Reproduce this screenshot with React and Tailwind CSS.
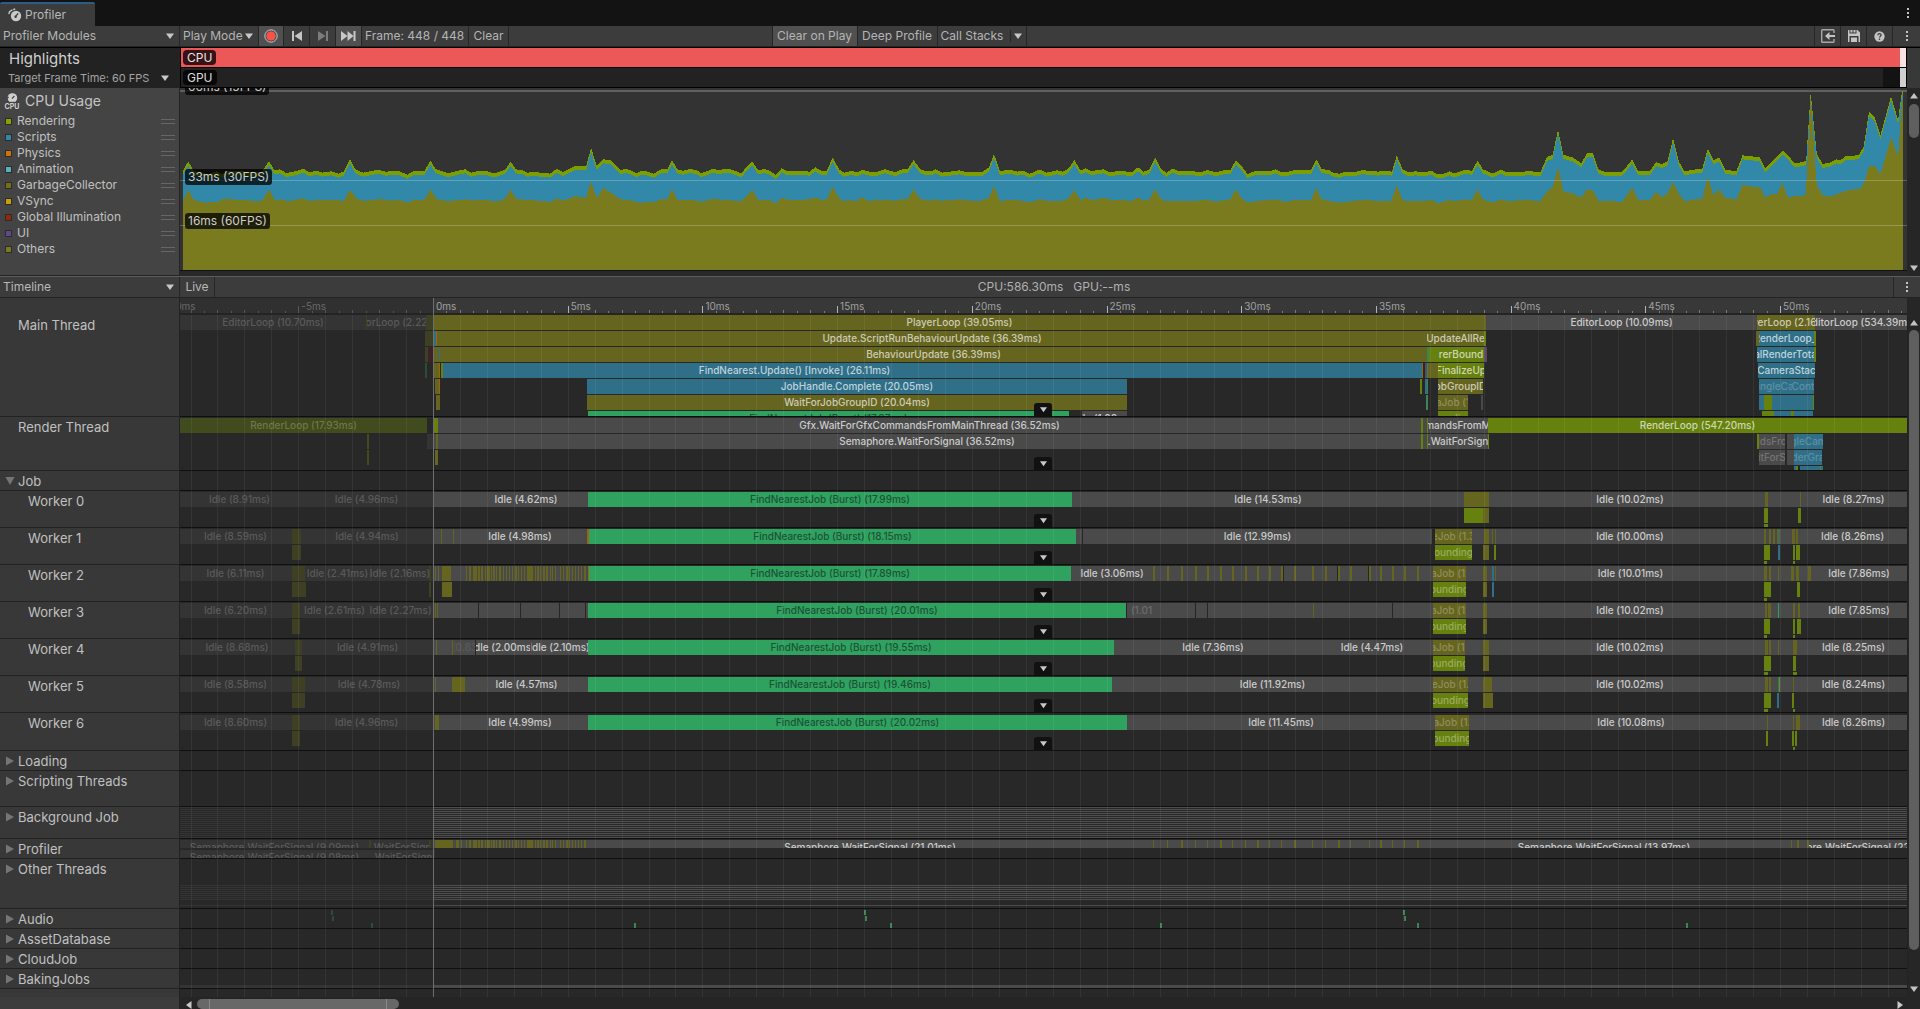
import React from 'react';
import clsx from 'clsx';

// Horizontal units of the timeline tracks, and where the current frame begins
const TRACK = 1727;
const FRAME_START = 253;
const MS = 26.94;

const pct = (v) => `${(v / TRACK) * 100}%`;

const COLORS = {
  olive: 'bg-[#66651f] text-[#cccbb4]',
  oliveFaint: 'bg-[#66651f] text-[#8f8e5c]',
  green: 'bg-[#67810e] text-[#cfd6b2]',
  greenFaint: 'bg-[#67810e] text-[#9bab60]',
  blue: 'bg-[#306f88] text-[#bdd3dc]',
  blueFaint: 'bg-[#306f88] text-[#5c90a5]',
  burst: 'bg-[#2fa260] text-[#1d5236]',
  gray: 'bg-[#4a4a4a] text-[#cacaca]',
  grayFaint: 'bg-[#4a4a4a] text-[#747474]',
  text: 'text-[#cacaca]',
  textFaint: 'text-[#6c6c6c]',
  orange: 'bg-[#9a6410]',
  purple: 'bg-[#5a4a66]',
  maroon: 'bg-[#3c2229]',
  teal: 'bg-[#3f8355]',
  gap: 'bg-[#262626]',
  pastGray: 'bg-[#343434] text-[#5a5a5a]',
  pastText: 'text-[#5a5a5a]',
  pastOlive: 'bg-[#3f3f24]',
  pastGreen: 'bg-[#404b1e] text-[#6e7847]',
  pastTeal: 'bg-[#314b39]',
};

// [lane, start, end, color, label]
const MAIN = [
  [0, 0, 186, 'pastGray', 'EditorLoop (10.70ms)'],
  [0, 186, 187, 'pastOlive'],
  [0, 187, 246, 'pastGray', 'EditorLoop (2.22ms)'],
  [0, 246, 253, 'pastOlive'],
  [0, 253, 1306, 'olive', 'PlayerLoop (39.05ms)'],
  [0, 1306, 1577, 'gray', 'EditorLoop (10.09ms)'],
  [0, 1577, 1635, 'olive', 'PlayerLoop (2.16ms)'],
  [0, 1635, 1727, 'gray', 'EditorLoop (534.39ms)'],
  [1, 245, 253, 'pastOlive'],
  [1, 254, 256, 'blue'],
  [1, 256, 257, 'orange'],
  [1, 257, 1247, 'olive', 'Update.ScriptRunBehaviourUpdate (36.39ms)'],
  [1, 1247, 1304, 'olive', 'UpdateAllRe'],
  [1, 1304, 1306, 'green'],
  [1, 1576, 1579, 'olive'],
  [1, 1579, 1634, 'blue', 'RenderLoop_I'],
  [1, 1634, 1636, 'green'],
  [2, 245, 248, 'pastOlive'],
  [2, 248, 253, 'maroon'],
  [2, 253, 259, 'olive'],
  [2, 259, 260, 'blue'],
  [2, 260, 1247, 'olive', 'BehaviourUpdate (36.39ms)'],
  [2, 1247, 1249, 'teal'],
  [2, 1249, 1258, 'green'],
  [2, 1258, 1304, 'green', 'rerBound'],
  [2, 1304, 1307, 'purple'],
  [2, 1577, 1634, 'blue', 'alRenderTota'],
  [2, 1634, 1636, 'green'],
  [3, 245, 247, 'pastTeal'],
  [3, 253, 259, 'olive'],
  [3, 259, 260, 'orange'],
  [3, 261, 263, 'green'],
  [3, 263, 966, 'blue', 'FindNearest.Update() [Invoke] (26.11ms)'],
  [3, 966, 1242, 'blue'],
  [3, 1242, 1243, 'orange'],
  [3, 1245, 1247, 'purple'],
  [3, 1247, 1248, 'teal'],
  [3, 1248, 1258, 'olive'],
  [3, 1258, 1304, 'green', 'FinalizeUp'],
  [3, 1578, 1635, 'blue', 'CameraStac'],
  [4, 255, 259, 'olive'],
  [4, 259, 260, 'orange'],
  [4, 407, 947, 'blue', 'JobHandle.Complete (20.05ms)'],
  [4, 1240, 1242, 'green'],
  [4, 1245, 1247, 'blue'],
  [4, 1247, 1248, 'teal'],
  [4, 1258, 1303, 'olive', 'obGroupID'],
  [4, 1579, 1612, 'blueFaint', 'ingleCa'],
  [4, 1612, 1634, 'blueFaint', 'Cont'],
  [5, 256, 260, 'olive'],
  [5, 407, 947, 'olive', 'WaitForJobGroupID (20.04ms)'],
  [5, 1246, 1248, 'teal'],
  [5, 1258, 1288, 'oliveFaint', 'aJob (1'],
  [5, 1301, 1303, 'gray'],
  [5, 1579, 1633, 'blue'],
  [5, 1584, 1592, 'green'],
  [5, 1633, 1634, 'green'],
  [6, 408, 889, 'burst', 'FindNearestJob (Burst) (17.87ms)'],
  [6, 902, 947, 'gray', 'Idle (1.00ms)'],
  [6, 1258, 1288, 'greenFaint', 'ounding'],
  [6, 1582, 1594, 'green'],
  [6, 1594, 1633, 'blue'],
  [6, 1611, 1614, 'green'],
];

const RENDER = [
  [0, 0, 247, 'pastGreen', 'RenderLoop (17.93ms)'],
  [0, 254, 258, 'green'],
  [0, 258, 1241, 'gray', 'Gfx.WaitForGfxCommandsFromMainThread (36.52ms)'],
  [0, 1241, 1243, 'green'],
  [0, 1243, 1247, 'gray'],
  [0, 1247, 1248, 'green'],
  [0, 1248, 1308, 'gray', 'mandsFromM'],
  [0, 1308, 1727, 'green', 'RenderLoop (547.20ms)'],
  [1, 187, 189, 'pastGreen'],
  [1, 247, 253, 'pastGray'],
  [1, 253, 1241, 'gray', 'Semaphore.WaitForSignal (36.52ms)'],
  [1, 256, 258, 'olive'],
  [1, 1241, 1243, 'green'],
  [1, 1243, 1247, 'gray'],
  [1, 1247, 1248, 'green'],
  [1, 1248, 1308, 'gray', '.WaitForSign'],
  [1, 1308, 1309, 'green'],
  [1, 1577, 1579, 'green'],
  [1, 1579, 1605, 'grayFaint', 'idsFro'],
  [1, 1607, 1614, 'gray'],
  [1, 1614, 1643, 'blueFaint', 'gleCam'],
  [2, 187, 189, 'pastGreen'],
  [2, 255, 258, 'olive'],
  [2, 1579, 1605, 'grayFaint', 'itForS'],
  [2, 1607, 1614, 'gray'],
  [2, 1614, 1642, 'blueFaint', 'derGra'],
  [3, 1614, 1643, 'blue'],
  [3, 1616, 1618, 'green'],
  [3, 1618, 1620, 'gap'],
  [3, 1640, 1641, 'green'],
];

const many = (lane, color, spans) => spans.map(([a, b]) => [lane, a, b, color]);

const STRIPES = [
  [286, 287], [289, 291], [293, 297], [298, 300], [301, 303], [305, 306], [307, 310], [311, 312],
  [313, 315], [316, 317], [319, 321], [323, 324], [326, 327], [329, 330], [332, 333], [335, 337],
  [338, 339], [341, 342], [344, 345], [347, 353], [355, 356], [357, 359], [360, 361], [363, 365],
  [366, 368], [370, 371], [372, 373], [375, 376], [380, 381], [383, 384], [386, 388], [389, 390],
  [392, 393], [395, 396], [398, 399], [401, 402], [404, 406],
];

const TICKS = [
  973, 987, 1001, 1015, 1027, 1040, 1052, 1065, 1077, 1089, 1101, 1114, 1132, 1145, 1158, 1170,
  1189, 1200, 1212, 1224, 1237,
];

const WORKERS = [
  {
    name: 'Worker 0',
    bars: [
      [0, 0, 119, 'pastText', 'Idle (8.91ms)'],
      [0, 120, 253, 'pastText', 'Idle (4.96ms)'],
      [0, 284, 408, 'text', 'Idle (4.62ms)'],
      [0, 408, 892, 'burst', 'FindNearestJob (Burst) (17.99ms)'],
      [0, 892, 1284, 'text', 'Idle (14.53ms)'],
      [0, 1284, 1309, 'olive'],
      [0, 1315, 1585, 'text', 'Idle (10.02ms)'],
      [0, 1620, 1727, 'text', 'Idle (8.27ms)'],
      ...many(0, 'olive', [[1585, 1588], [1620, 1621]]),
      ...many(1, 'green', [[1284, 1303], [1584, 1588], [1618, 1621]]),
      [1, 1303, 1309, 'olive'],
      [2, 1584, 1588, 'green'],
    ],
  },
  {
    name: 'Worker 1',
    bars: [
      [0, 0, 111, 'pastText', 'Idle (8.59ms)'],
      ...many(0, 'pastOlive', [[112, 121]]),
      ...many(1, 'pastOlive', [[112, 121]]),
      [0, 121, 253, 'pastText', 'Idle (4.94ms)'],
      ...many(0, 'olive', [[261, 262], [273, 274]]),
      [0, 273, 407, 'text', 'Idle (4.98ms)'],
      [0, 407, 409, 'orange'],
      [0, 409, 896, 'burst', 'FindNearestJob (Burst) (18.15ms)'],
      ...many(0, 'gap', [[902, 903], [1252, 1255]]),
      [0, 903, 1252, 'text', 'Idle (12.99ms)'],
      [0, 1255, 1292, 'oliveFaint', 'eJob (1.3'],
      [1, 1255, 1292, 'greenFaint', 'ounding'],
      [0, 1315, 1585, 'text', 'Idle (10.00ms)'],
      ...many(0, 'olive', [[1304, 1309], [1312, 1313], [1315, 1316], [1584, 1586], [1589, 1591], [1593, 1595], [1597, 1599], [1612, 1615], [1616, 1618]]),
      [0, 1599, 1600, 'blue'],
      [1, 1303, 1309, 'olive'],
      ...many(1, 'green', [[1314, 1316], [1584, 1590], [1613, 1615], [1616, 1620]]),
      [1, 1598, 1600, 'blue'],
      ...many(2, 'green', [[1584, 1587], [1613, 1615]]),
      [0, 1618, 1727, 'text', 'Idle (8.26ms)'],
    ],
  },
  {
    name: 'Worker 2',
    bars: [
      [0, 0, 111, 'pastText', 'Idle (6.11ms)'],
      ...many(0, 'pastOlive', [[112, 125], [190, 191], [249, 251]]),
      ...many(1, 'pastOlive', [[112, 126], [249, 251]]),
      [0, 125, 190, 'pastText', 'Idle (2.41ms)'],
      [0, 190, 250, 'pastText', 'Idle (2.16ms)'],
      ...many(0, 'olive', [[255, 256], [258, 259], [262, 271]]),
      [1, 262, 272, 'olive'],
      ...many(0, 'olive', STRIPES),
      [0, 408, 409, 'orange'],
      [0, 409, 891, 'burst', 'FindNearestJob (Burst) (17.89ms)'],
      [0, 891, 973, 'text', 'Idle (3.06ms)'],
      ...many(0, 'olive', TICKS.map((t) => [t, t + 2])),
      ...many(0, 'gap', [[1103, 1104], [1157, 1158], [1188, 1189]]),
      [0, 1253, 1286, 'oliveFaint', 'aJob (1.'],
      [1, 1253, 1286, 'greenFaint', 'ounding'],
      ...many(0, 'olive', [[1303, 1307], [1315, 1316], [1584, 1587], [1589, 1591], [1598, 1599], [1611, 1614], [1616, 1619], [1628, 1631]]),
      [1, 1303, 1307, 'olive'],
      [0, 1312, 1314, 'blue'],
      [1, 1312, 1314, 'blue'],
      [0, 1316, 1585, 'text', 'Idle (10.01ms)'],
      ...many(1, 'green', [[1584, 1591], [1617, 1620]]),
      [2, 1584, 1587, 'green'],
      [0, 1631, 1727, 'text', 'Idle (7.86ms)'],
    ],
  },
  {
    name: 'Worker 3',
    bars: [
      [0, 0, 111, 'pastText', 'Idle (6.20ms)'],
      [0, 112, 120, 'pastOlive'],
      [1, 112, 120, 'pastOlive'],
      [0, 120, 189, 'pastText', 'Idle (2.61ms)'],
      [0, 189, 252, 'pastText', 'Idle (2.27ms)'],
      ...many(0, 'olive', [[255, 256], [257, 258]]),
      ...many(0, 'gap', [[298, 299], [340, 341], [379, 380], [405, 406], [946, 947], [1015, 1016], [1027, 1028], [1212, 1213]]),
      [0, 408, 946, 'burst', 'FindNearestJob (Burst) (20.01ms)'],
      [0, 949, 974, 'textFaint', '(1.01'],
      [0, 1133, 1134, 'olive'],
      [0, 1253, 1286, 'oliveFaint', 'aJob (1.'],
      [1, 1253, 1286, 'greenFaint', 'ounding'],
      ...many(0, 'olive', [[1303, 1307], [1585, 1587], [1588, 1591], [1613, 1615], [1618, 1620]]),
      [1, 1303, 1307, 'olive'],
      [0, 1598, 1599, 'burst'],
      [0, 1315, 1585, 'text', 'Idle (10.02ms)'],
      ...many(1, 'green', [[1584, 1590], [1613, 1615], [1617, 1621]]),
      ...many(2, 'green', [[1584, 1587], [1613, 1615]]),
      [0, 1631, 1727, 'text', 'Idle (7.85ms)'],
    ],
  },
  {
    name: 'Worker 4',
    bars: [
      [0, 0, 114, 'pastText', 'Idle (8.68ms)'],
      [0, 115, 122, 'pastOlive'],
      [1, 115, 122, 'pastOlive'],
      [0, 122, 253, 'pastText', 'Idle (4.91ms)'],
      ...many(0, 'olive', [[256, 257], [272, 273]]),
      [0, 274, 295, 'pastText', '(0.83'],
      [0, 295, 296, 'gap'],
      [0, 296, 350, 'text', 'Idle (2.00ms)'],
      [0, 351, 408, 'text', 'Idle (2.10ms)'],
      [0, 408, 934, 'burst', 'FindNearestJob (Burst) (19.55ms)'],
      [0, 934, 1132, 'text', 'Idle (7.36ms)'],
      [0, 1132, 1252, 'text', 'Idle (4.47ms)'],
      [0, 1253, 1285, 'oliveFaint', 'aJob (1.'],
      [1, 1253, 1285, 'greenFaint', 'ounding'],
      ...many(0, 'olive', [[1303, 1309], [1585, 1588], [1589, 1591], [1598, 1599], [1613, 1617]]),
      [1, 1303, 1309, 'olive'],
      [0, 1315, 1585, 'text', 'Idle (10.02ms)'],
      ...many(1, 'green', [[1584, 1591], [1613, 1616]]),
      ...many(2, 'green', [[1584, 1588], [1613, 1617]]),
      [0, 1620, 1727, 'text', 'Idle (8.25ms)'],
    ],
  },
  {
    name: 'Worker 5',
    bars: [
      [0, 0, 111, 'pastText', 'Idle (8.58ms)'],
      [0, 112, 125, 'pastOlive'],
      [1, 112, 125, 'pastOlive'],
      [0, 125, 253, 'pastText', 'Idle (4.78ms)'],
      ...many(0, 'olive', [[255, 256], [272, 285]]),
      [0, 285, 408, 'text', 'Idle (4.57ms)'],
      [0, 408, 932, 'burst', 'FindNearestJob (Burst) (19.46ms)'],
      [0, 932, 1253, 'text', 'Idle (11.92ms)'],
      [0, 1253, 1288, 'oliveFaint', 'eJob (1.'],
      [1, 1253, 1288, 'greenFaint', 'ounding'],
      ...many(0, 'olive', [[1303, 1312], [1585, 1588], [1589, 1591], [1598, 1599], [1613, 1614]]),
      [0, 1599, 1600, 'burst'],
      [1, 1303, 1313, 'olive'],
      [0, 1315, 1585, 'text', 'Idle (10.02ms)'],
      ...many(1, 'green', [[1584, 1591], [1612, 1614]]),
      [1, 1597, 1599, 'blue'],
      ...many(2, 'green', [[1584, 1588], [1613, 1615]]),
      [0, 1620, 1727, 'text', 'Idle (8.24ms)'],
    ],
  },
  {
    name: 'Worker 6',
    height: 'h-[38px]',
    pad: 2,
    bars: [
      [0, 0, 111, 'pastText', 'Idle (8.60ms)'],
      [0, 112, 120, 'pastOlive'],
      [1, 112, 120, 'pastOlive'],
      [0, 120, 253, 'pastText', 'Idle (4.96ms)'],
      [0, 255, 259, 'olive'],
      [0, 272, 408, 'text', 'Idle (4.99ms)'],
      [0, 408, 947, 'burst', 'FindNearestJob (Burst) (20.02ms)'],
      [0, 947, 1255, 'text', 'Idle (11.45ms)'],
      [0, 1255, 1289, 'oliveFaint', 'aJob (1.'],
      [1, 1255, 1289, 'greenFaint', 'ounding'],
      [0, 1316, 1586, 'text', 'Idle (10.08ms)'],
      ...many(0, 'olive', [[1587, 1588], [1613, 1614], [1616, 1620]]),
      ...many(1, 'green', [[1586, 1588], [1612, 1614], [1615, 1617]]),
      [2, 1613, 1615, 'green'],
      [0, 1620, 1727, 'text', 'Idle (8.26ms)'],
    ],
  },
];

const PROFILER = [
  [0, 0, 189, 'pastText', 'Semaphore.WaitForSignal (9.09ms)'],
  [0, 189, 191, 'pastOlive'],
  [0, 192, 250, 'pastText', '.WaitForSign'],
  [0, 249, 251, 'pastOlive'],
  ...many(0, 'olive', [[255, 273], [276, 279], [281, 282]]),
  ...many(0, 'olive', STRIPES),
  [0, 408, 972, 'text', 'Semaphore.WaitForSignal (21.01ms)'],
  ...many(0, 'olive', TICKS.map((t, i) => [t, t + (i % 3 === 2 ? 2 : 1)])),
  [0, 1238, 1610, 'text', 'Semaphore.WaitForSignal (13.97ms)'],
  ...many(0, 'olive', [[1611, 1612], [1617, 1619], [1627, 1629]]),
  [0, 1629, 1727, 'text', 'ore.WaitForSignal (22'],
];

const AUDIO_TOP = [[151, 'pastTeal'], [684, 'teal'], [1223, 'teal']];
const AUDIO_BOTTOM = [[191, 'pastTeal'], [454, 'teal'], [710, 'teal'], [980, 'teal'], [1237, 'teal'], [1506, 'teal']];

const LEGEND = [
  ['Rendering', 'bg-[#85a400]'],
  ['Scripts', 'bg-[#3288a9]'],
  ['Physics', 'bg-[#d07300]'],
  ['Animation', 'bg-[#58b2bb]'],
  ['GarbageCollector', 'bg-[#756f12]'],
  ['VSync', 'bg-[#c8a100]'],
  ['Global Illumination', 'bg-[#93280a]'],
  ['UI', 'bg-[#63478b]'],
  ['Others', 'bg-[#7a7a1f]'],
];

// CPU chart samples, in three pages of 1568 units: total time and the share of "Others"
const PAGE = 1568;
const TOTAL = [
  '448,514 461,484 474,512 490,518 510,522 530,514 545,522 560,512 590,513 615,518 640,517 659,484 672,510 686,508 700,518 715,517 743,506 757,517 775,512 790,518 812,514 830,521 843,514 857,477 870,508 890,518 925,509 945,515 975,512 998,524 1012,514 1040,514 1054,481 1068,508 1085,514 1099,520 1115,514 1140,508 1155,518 1172,513 1195,514 1210,520 1237,510 1251,485 1264,508 1280,511 1292,518 1310,516 1348,521 1364,506 1380,516 1410,498 1436,499 1448,444 1462,496 1478,478 1495,480 1520,511 1535,506 1560,520',
  '0,514 15,514 33,521 52,508 68,507 78,480 92,508 105,512 122,507 138,510 150,520 176,508 195,509 218,507 235,513 247,520 275,484 290,511 305,507 318,512 332,524 347,505 362,514 388,512 415,515 430,502 446,514 457,512 472,474 488,508 500,518 515,514 535,515 545,510 565,516 580,516 600,508 625,516 644,508 656,508 670,480 687,508 700,514 712,514 725,508 740,518 783,511 800,516 838,516 855,502 867,462 882,513 905,509 925,515 938,512 955,521 980,508 995,518 1022,511 1036,515 1050,505 1064,480 1079,511 1092,505 1106,513 1135,508 1150,516 1178,513 1205,516 1220,502 1234,515 1248,508 1262,472 1276,507 1290,518 1305,506 1320,514 1355,514 1375,516 1390,510 1410,517 1430,511 1446,510 1460,480 1474,498 1488,522 1505,514 1540,514 1558,508',
  '0,515 18,516 34,511 76,511 89,478 102,508 118,509 132,519 145,521 160,516 180,517 200,511 222,512 240,515 256,512 274,515 286,466 300,508 315,517 330,514 357,517 370,511 383,522 400,522 414,514 428,520 455,509 470,513 484,482 497,508 522,521 541,508 555,516 590,516 610,513 638,517 654,470 668,465 681,388 694,464 716,472 738,490 752,460 766,458 780,508 796,516 838,516 863,478 878,514 906,514 921,487 935,492 949,484 963,414 977,484 991,514 1020,508 1034,508 1048,446 1062,480 1076,472 1091,509 1118,514 1133,466 1175,472 1189,506 1203,486 1217,470 1231,452 1245,466 1259,489 1280,487 1289,482 1300,279 1315,462 1329,491 1344,490 1362,478 1374,480 1386,467 1400,469 1418,464 1430,440 1443,334 1457,352 1471,406 1497,289 1514,360 1524,273 1526,273',
];
const OTHERS = [
  '448,604 461,570 475,600 505,608 535,605 545,597 600,600 635,604 645,598 659,568 672,600 690,598 705,604 743,595 757,602 800,600 843,602 857,570 875,596 890,603 930,597 960,602 975,599 998,608 1012,600 1040,601 1054,568 1070,598 1100,603 1140,598 1165,601 1195,600 1215,605 1237,597 1251,568 1264,597 1310,601 1348,606 1364,595 1382,602 1410,588 1435,594 1448,544 1462,594 1478,564 1500,580 1520,598 1545,600 1566,608',
  '33,606 52,598 68,598 78,567 92,600 130,600 150,605 176,597 218,600 247,604 275,570 290,600 318,600 332,610 347,594 370,600 415,598 430,592 446,600 458,597 472,560 488,595 500,603 515,600 528,604 543,592 560,602 600,600 625,602 640,598 656,597 670,568 687,597 712,602 725,598 740,602 783,598 830,604 855,594 867,557 882,603 915,599 955,606 980,598 1000,603 1036,602 1050,594 1064,570 1079,600 1092,594 1110,600 1135,593 1155,600 1205,602 1220,592 1234,602 1248,598 1262,567 1276,597 1290,604 1350,604 1390,599 1410,605 1446,598 1460,567 1474,596 1488,607 1520,602 1558,598',
  '0,602 18,606 34,600 76,600 89,564 102,598 145,608 200,600 272,604 286,556 300,600 315,604 355,604 370,598 385,609 400,606 414,598 425,604 455,598 470,600 484,568 497,598 522,608 541,598 555,603 600,600 638,603 654,574 668,562 681,500 694,574 716,580 738,592 752,568 766,570 780,603 838,605 863,563 878,600 906,600 921,576 935,592 949,580 963,546 977,582 991,604 1020,598 1034,598 1048,530 1062,586 1076,568 1091,594 1118,598 1133,555 1160,560 1175,560 1189,594 1203,582 1217,582 1231,550 1245,594 1259,588 1288,586 1300,290 1315,556 1329,584 1344,590 1362,584 1386,572 1420,566 1430,552 1443,498 1457,498 1471,522 1497,412 1514,470 1524,300 1526,300',
];

const toArea = (pages, drop = 0) => {
  const points = pages.flatMap((page, i) =>
    page.split(' ').map((pair) => {
      const [x, y] = pair.split(',').map(Number);
      return `${x + i * PAGE},${y + drop}`;
    })
  );
  return `448,810 ${points.join(' ')} 4662,810`;
};

const Triangle = ({ dir = 'down', className }) => (
  <svg
    viewBox="0 0 8 8"
    className={clsx('size-2 shrink-0 fill-current', dir === 'up' && 'rotate-180', dir === 'left' && 'rotate-90', dir === 'right' && '-rotate-90', className)}
    aria-hidden="true"
  >
    <path d="M0 1.5h8L4 7z" />
  </svg>
);

const FoldArrow = ({ open }) => (
  <svg viewBox="0 0 10 10" className="mr-[3px] size-[10px] shrink-0 fill-[#757575]" aria-hidden="true">
    <path d={open ? 'M.5 1h9L5 9z' : 'M1 .5v9L9 5z'} />
  </svg>
);

const Kebab = () => (
  <svg viewBox="0 0 4 12" className="h-3 w-1 fill-[#c4c4c4]" aria-hidden="true">
    <path d="M1 1h2v2H1zM1 5h2v2H1zM1 9h2v2H1z" />
  </svg>
);

const Dropdown = ({ label, value, className, caret = 'right-[5px]' }) => (
  <div className={clsx('relative flex items-center', className)}>
    <select aria-label={label} defaultValue={value} className="h-full w-full appearance-none bg-transparent pl-[3px] outline-none">
      <option>{value}</option>
    </select>
    <Triangle className={clsx('pointer-events-none absolute text-[#c8c8c8]', caret)} />
  </div>
);

const ToolButton = ({ label, active, className, children }) => (
  <button
    aria-label={label}
    className={clsx('flex h-full items-center justify-center border-r border-[#262626]', active && 'bg-[#505050]', className)}
  >
    {children}
  </button>
);

const Stopwatch = () => (
  <svg viewBox="0 0 14 14" className="size-[14px] shrink-0" aria-hidden="true">
    <circle cx="8" cy="8" r="5.2" fill="#c9c9c9" />
    <path d="M.8 6 1.6 3.8 4.4 1.8M5.2 1.6 7.200 1" stroke="#c9c9c9" strokeWidth="1.4" fill="none" />
    <path d="M7.600 8.400 10.200 5.400" stroke="#3c3c3c" strokeWidth="1.4" />
    <circle cx="7.600" cy="8.800" r="1.200" fill="#3c3c3c" />
  </svg>
);

const CpuIcon = () => (
  <svg viewBox="0 0 16 16" className="size-4 shrink-0" aria-hidden="true">
    <circle cx="8.4" cy="5" r="4.8" fill="#d0d0d0" />
    <path d="M3 5.4 4.6 4M8 5.6l2.4-2.8" stroke="#444" strokeWidth="1.3" />
    <path d="M3 9.4h11" stroke="#444" strokeWidth="1.2" />
    <text x="8" y="15.600" textAnchor="middle" fontSize="7" fontWeight="700" fill="#d0d0d0">CPU</text>
  </svg>
);

const Toolbar = () => (
  <div className="flex h-[21px] shrink-0 items-stretch border-b border-[#232323] bg-[#3c3c3c] text-[#b4b4b4]">
    <Dropdown label="Profiler Modules" value="Profiler Modules" className="w-[180px] border-r border-[#262626]" />
    <Dropdown label="Play Mode" value="Play Mode" className="w-[79px] border-r border-[#262626]" />
    <ToolButton label="Record" active className="w-[25px]">
      <svg viewBox="0 0 14 14" className="size-[14px]" aria-hidden="true">
        <circle cx="7" cy="7" r="6.2" fill="none" stroke="#c4c4c4" />
        <circle cx="7" cy="7" r="4.6" fill="#fb5147" />
      </svg>
    </ToolButton>
    <ToolButton label="Previous frame" className="w-[26px]">
      <svg viewBox="0 0 12 10" className="h-[10px] w-3 fill-[#c4c4c4]" aria-hidden="true">
        <path d="M1 0h2v10H1zM11 0v10L3.5 5z" />
      </svg>
    </ToolButton>
    <ToolButton label="Next frame" className="w-[26px]">
      <svg viewBox="0 0 12 10" className="h-[10px] w-3 fill-[#7c7c7c]" aria-hidden="true">
        <path d="M9 0h2v10H9zM1 0v10l7.5-5z" />
      </svg>
    </ToolButton>
    <ToolButton label="Current frame" active className="w-[26px]">
      <svg viewBox="0 0 15 10" className="h-[10px] w-[15px] fill-[#c8c8c8]" aria-hidden="true">
        <path d="M0 0v10l6.5-5zM6.5 0v10l6-5zM12.5 0h2v10h-2z" />
      </svg>
    </ToolButton>
    <span className="flex w-[107px] items-center border-r border-[#262626] pl-[3px] whitespace-nowrap">Frame: 448 / 448</span>
    <ToolButton className="w-10">Clear</ToolButton>
    <div className="flex-1 border-r border-[#262626]" />
    <ToolButton active className="w-[85px] whitespace-nowrap">Clear on Play</ToolButton>
    <ToolButton className="w-[80px] whitespace-nowrap">Deep Profile</ToolButton>
    <div className="flex w-[89px] items-center border-r border-[#262626]">
      <button className="w-[72px] pl-[3px] text-left whitespace-nowrap">Call Stacks</button>
      <button aria-label="Call Stacks options" className="flex h-3 flex-1 items-center justify-center border-l border-[#262626]">
        <Triangle className="text-[#c8c8c8]" />
      </button>
    </div>
    <div className="flex-3 border-r border-[#262626]" />
    <ToolButton label="Load" className="w-[26px]">
      <svg viewBox="0 0 14 14" className="size-[14px]" fill="none" stroke="#c4c4c4" aria-hidden="true">
        <path d="M13 4V1.500a.8.8 0 0 0-.8-.8H1.500a.8.8 0 0 0-.8.8v11a.8.8 0 0 0 .8.8h10.700a.8.8 0 0 0 .8-.8V10" stroke="#a8a8a8" strokeWidth="1.4" />
        <path d="M7 7h7" strokeWidth="2" />
        <path d="M8.500 3v8L4 7z" fill="#c4c4c4" stroke="none" />
      </svg>
    </ToolButton>
    <ToolButton label="Save" className="w-[26px]">
      <svg viewBox="0 0 12 12" className="size-3" aria-hidden="true">
        <path d="M0 0h1.5v3.5h7V0h1L12 2.5V12h-1.5V6h-9v6H0z" fill="#c4c4c4" />
        <path d="M2.500 0h2v2.500h-2zM5.500 0h2v2.500h-2zM3 7.500h6V12H3z" fill="#c4c4c4" />
      </svg>
    </ToolButton>
    <ToolButton label="Help" className="w-[26px]">
      <svg viewBox="0 0 12 12" className="size-[11px]" aria-hidden="true">
        <circle cx="6" cy="6" r="5.6" fill="#c4c4c4" />
        <path d="M4.2 4.6c0-2.400 3.600-2.400 3.600-.2 0 1.300-1.800 1.300-1.800 2.800M6 8.300v1.400" fill="none" stroke="#3c3c3c" strokeWidth="1.4" />
      </svg>
    </ToolButton>
    <button aria-label="More" className="flex w-[27px] items-center justify-center">
      <Kebab />
    </button>
  </div>
);

const Highlights = () => (
  <section className="flex h-[41px] shrink-0 border-t border-black bg-[#383838]">
    <div className="flex w-[180px] flex-col bg-[#222222]">
      <h2 className="h-[22px] pl-[9px] text-[15px] leading-[22px] text-[#cfcfcf]">Highlights</h2>
      <Dropdown
        label="Target Frame Time"
        value="Target Frame Time: 60 FPS"
        className="h-4 pl-[5px] text-[11px] text-[#a4a4a4]"
        caret="right-[11px]"
      />
    </div>
    <div className="min-w-0 flex-1 border-l border-black">
      <div className="flex h-5 items-center border-b border-black bg-[#ec5757]">
        <span className="ml-[2px] rounded-[4px] bg-[#371315] px-1 leading-[15px] text-[#e4e4e4]">CPU</span>
        <span className="ml-auto h-full w-[6px] bg-[#fbe3e3]" />
      </div>
      <div className="flex h-5 items-center border-b border-black bg-[#222222]">
        <span className="ml-[2px] rounded-[4px] bg-[#070707] px-1 leading-[15px] text-[#dcdcdc]">GPU</span>
        <span className="ml-auto h-full w-[17px] bg-[#131313]" />
        <span className="h-full w-[6px] bg-[#cfcfcf]" />
      </div>
    </div>
    <div className="w-[14px] border-l border-black" />
  </section>
);

const ChartLabel = ({ className, children }) => (
  <span className={clsx('absolute left-[5px] rounded-[3px] bg-black/75 px-[3px] leading-4 text-[#cdcdcd]', className)}>{children}</span>
);

const CpuChart = () => (
  <section className="flex h-[188px] shrink-0 bg-[#282828]">
    <div className="w-[180px] border-r border-b border-[#242424] bg-[#444444]">
      <div className="flex h-[25px] items-center gap-[5px] pl-1 text-[14px] text-[#c4c4c4]">
        <CpuIcon />
        <h2>CPU Usage</h2>
      </div>
      <ul>
        {LEGEND.map(([name, swatch]) => (
          <li key={name} className="flex h-4 items-center pr-[4px] pl-[5px] text-[#c0c0c0]">
            <span className={clsx('size-[7px] border border-[#2c2c2c]', swatch)} />
            <span className="ml-[5px] leading-4">{name}</span>
            <span className="ml-auto h-[5px] w-[14px] border-y border-[#656565]" />
          </li>
        ))}
      </ul>
    </div>
    <div className="flex min-w-0 flex-1 flex-col">
      <div className="relative h-[182px] overflow-hidden bg-[#333333]">
        <svg viewBox="441 264 4231 546" preserveAspectRatio="none" className="absolute inset-0 h-full w-full" shapeRendering="crispEdges" aria-hidden="true">
          <rect x="441" y="270" width="4231" height="6" fill="#606060" />
          <polygon points={toArea(TOTAL)} fill="#7d9e03" />
          <polygon points={toArea(TOTAL, 12)} fill="#3288a9" />
          <polygon points={toArea(OTHERS)} fill="#7a7a1e" />
          <path d="M441 540h4231v3H441zM441 675h4231v3H441z" fill="#ffffff" fillOpacity=".22" />
        </svg>
        <ChartLabel className="-top-[9px]">66ms (15FPS)</ChartLabel>
        <ChartLabel className="top-[81px]">33ms (30FPS)</ChartLabel>
        <ChartLabel className="top-[125px]">16ms (60FPS)</ChartLabel>
      </div>
      <div className="h-[6px] border-t border-[#111111]" />
    </div>
    <div className="flex w-[13px] flex-col items-center bg-[#262626] py-1 text-[#c4c4c4]">
      <Triangle dir="up" />
      <span className="mt-1 h-[34px] w-[10px] rounded-full bg-[#5f5f5f]" />
      <Triangle className="mt-auto" />
    </div>
  </section>
);

const Bars = ({ bars, pad = 0 }) =>
  bars.map(([lane, start, end, color, label], i) => (
    <div
      key={i}
      className={clsx('absolute flex h-[15px] justify-center overflow-hidden text-[10px] leading-[15px] font-medium', COLORS[color])}
      style={{ left: pct(start), width: pct(end - start), top: pad + lane * 16 }}
    >
      {label && <span className="shrink-0 whitespace-nowrap">{label}</span>}
    </div>
  ));

const Split = ({ className, past = 'bg-[#343434]', now = 'bg-[#4a4a4a]' }) => (
  <div className={clsx('absolute inset-x-0 flex', className)}>
    <span className={past} style={{ width: pct(FRAME_START) }} />
    <span className={clsx('flex-1', now)} />
  </div>
);

const Row = ({ name, height, fold, indent, more, children }) => (
  <div className={clsx('flex shrink-0', height)}>
    <div className="w-[180px] border-r border-b border-[#222222] bg-[#383838] text-[13px] leading-5 text-[#c0c0c0]">
      {fold ? (
        <button className="flex items-center pl-[5px]">
          <FoldArrow open={fold === 'open'} />
          {name}
        </button>
      ) : (
        <div className={indent ? 'pl-7' : 'pl-[18px]'}>{name}</div>
      )}
    </div>
    <div className="relative min-w-0 flex-1 overflow-hidden border-b border-[#0f0f0f] bg-[#282828]">
      {children}
      {more && (
        <button
          aria-label={`Expand ${name}`}
          className="absolute bottom-0 z-20 flex h-[13px] w-[18px] items-center justify-center rounded-t-[3px] bg-[#111111] text-[#c8c8c8]"
          style={{ left: pct(854) }}
        >
          <Triangle className="size-[7px]" />
        </button>
      )}
    </div>
  </div>
);

const Ruler = () => {
  const ticks = [];
  for (let half = -18; half <= 98; half += 1) ticks.push(half);
  ticks.push(99, 100, 101, 102, 103, 104, 105, 106, 107, 108, 109);
  return (
    <div className="flex h-[17px] shrink-0">
      <div className="w-[180px] border-r border-[#222222] bg-[#383838]" />
      <div className="relative min-w-0 flex-1 overflow-hidden border-b-2 border-[#242424] bg-[#383838]">
        <div className="absolute inset-y-0 left-0 bg-[#303030]" style={{ width: pct(FRAME_START) }} />
        {ticks.map((half) => (
          <span
            key={half}
            className={clsx(
              'absolute bottom-0 w-px',
              half < 0 ? 'bg-[#565656]' : half % 10 === 0 ? 'bg-[#b4b4b4]' : 'bg-[#7c7c7c]',
              half % 10 === 0 ? 'h-[7px]' : half % 2 === 0 ? 'h-[3px]' : 'h-[2px]'
            )}
            style={{ left: pct(FRAME_START + (half * MS) / 2) }}
          />
        ))}
        {[-10, -5, 0, 5, 10, 15, 20, 25, 30, 35, 40, 45, 50].map((ms) => (
          <span
            key={ms}
            className={clsx('absolute top-[2px] pl-[3px] text-[10px] leading-3', ms < 0 ? 'text-[#686868]' : 'text-[#a0a0a0]')}
            style={{ left: pct(FRAME_START + ms * MS) }}
          >
            {ms}ms
          </span>
        ))}
      </div>
    </div>
  );
};

const Grid = () => {
  const lines = [];
  for (let ms = -9; ms <= 54; ms += 1) lines.push(ms);
  return (
    <div className="pointer-events-none absolute inset-y-0 right-0 left-[180px] z-10 overflow-hidden">
      {lines.map((ms) => (
        <span
          key={ms}
          className={clsx('absolute bottom-0 w-px', ms === 0 ? 'top-0 bg-[#6e6e6e]' : 'top-[17px] bg-white/6')}
          style={{ left: pct(FRAME_START + ms * MS) }}
        />
      ))}
    </div>
  );
};

const Tick = ({ x, color, className }) => (
  <span className={clsx('absolute h-[5px] w-[2px]', className, COLORS[color])} style={{ left: pct(x) }} />
);

const Timeline = () => (
  <section className="flex min-h-0 flex-1 flex-col">
    <div className="flex h-[22px] shrink-0 border-t border-b border-t-[#5c5c5c] border-b-[#232323] bg-[#3c3c3c] text-[#b8b8b8]">
      <Dropdown label="View" value="Timeline" className="w-[180px] border-r border-[#262626]" />
      <button className="w-[35px] border-r border-[#262626] text-center">Live</button>
      <div className="flex flex-1 items-center justify-center gap-[10px] text-[#b0b0b0]">
        <span>CPU:586.30ms</span>
        <span>GPU:--ms</span>
      </div>
      <button aria-label="Timeline options" className="flex w-[27px] items-center justify-center border-l border-[#262626]">
        <Kebab />
      </button>
    </div>
    <div className="flex min-h-0 flex-1">
      <div className="flex min-w-0 flex-1 flex-col">
        <div className="relative flex min-h-0 flex-1 flex-col overflow-hidden">
          <Ruler />
          <Row name="Main Thread" height="h-[102px]" more>
            <Bars bars={MAIN} />
          </Row>
          <Row name="Render Thread" height="h-[54px]" more>
            <Bars bars={RENDER} pad={1} />
          </Row>
          <Row name="Job" height="h-5" fold="open" />
          {WORKERS.map((worker) => (
            <Row key={worker.name} name={worker.name} height={worker.height || 'h-[37px]'} indent more>
              <Split className={clsx('h-[15px]', worker.pad ? 'top-[2px]' : 'top-px')} />
              <Bars bars={worker.bars} pad={worker.pad || 1} />
            </Row>
          ))}
          <Row name="Loading" height="h-5" fold="closed" />
          <Row name="Scripting Threads" height="h-9" fold="closed" />
          <Row name="Background Job" height="h-8" fold="closed">
            <Split
              className="inset-y-0"
              past="bg-[repeating-linear-gradient(to_bottom,#343434_0_1px,transparent_1px_2px)]"
              now="bg-[repeating-linear-gradient(to_bottom,#4e4e4e_0_1px,transparent_1px_2px)]"
            />
          </Row>
          <Row name="Profiler" height="h-5" fold="closed">
            <div className="absolute inset-x-0 top-px h-2 overflow-hidden">
              <Split className="inset-y-0" />
              <Bars bars={PROFILER} />
            </div>
            <div className="absolute inset-x-0 top-[11px] h-2 overflow-hidden">
              <Bars
                bars={[
                  [0, 0, 189, 'pastGray', 'Semaphore.WaitForSignal (9.08ms)'],
                  [0, 189, 255, 'pastGray', '.WaitForSign'],
                ]}
              />
            </div>
          </Row>
          <Row name="Other Threads" height="h-[50px]" fold="closed">
            <Split
              className="top-[26px] h-4"
              past="bg-[repeating-linear-gradient(to_bottom,#343434_0_1px,transparent_1px_2px)]"
              now="bg-[repeating-linear-gradient(to_bottom,#4e4e4e_0_1px,transparent_1px_2px)]"
            />
            <Split className="bottom-[2px] h-px" />
          </Row>
          <Row name="Audio" height="h-5" fold="closed">
            {AUDIO_TOP.map(([x, color]) => (
              <React.Fragment key={x}>
                <Tick x={x} color={color} className="top-px" />
                <Tick x={x + 1} color={color} className="top-[7px]" />
              </React.Fragment>
            ))}
            {AUDIO_BOTTOM.map(([x, color]) => (
              <Tick key={x} x={x} color={color} className="bottom-0" />
            ))}
          </Row>
          <Row name="AssetDatabase" height="h-5" fold="closed" />
          <Row name="CloudJob" height="h-5" fold="closed" />
          <Row name="BakingJobs" height="h-5" fold="closed">
            <Split className="bottom-0 h-[3px]" />
          </Row>
          <div className="flex min-h-0 flex-1">
            <div className="w-[180px] border-r border-[#222222] bg-[#383838]" />
            <div className="flex-1 bg-[#282828]" />
          </div>
          <Grid />
        </div>
        <div className="flex h-3 shrink-0">
          <div className="w-[180px] border-r border-[#222222] bg-[#3c3c3c]" />
          <div className="flex flex-1 items-end bg-[#252525] pr-[3px] pl-[5px] text-[#c8c8c8]">
            <Triangle dir="left" />
            <span className="ml-1 flex h-[10px] w-[202px] justify-between rounded-full bg-[#686868] px-3">
              <span className="w-px bg-[#8a8a8a]" />
              <span className="w-px bg-[#8a8a8a]" />
            </span>
            <Triangle dir="right" className="ml-auto" />
          </div>
        </div>
      </div>
      <div className="mt-[17px] mb-3 flex w-[13px] flex-col items-center border-l border-[#222222] bg-[#262626] py-1 text-[#c4c4c4]">
        <Triangle dir="up" />
        <span className="mt-[3px] w-[10px] flex-[0_0_92%] rounded-full bg-[#5f5f5f]" />
        <Triangle className="mt-auto" />
      </div>
    </div>
  </section>
);

const App = () => (
  <div className="flex h-screen flex-col overflow-hidden bg-[#262626] font-['Inter',sans-serif] text-[12px] text-[#c4c4c4]">
    <header className="flex h-[26px] shrink-0 items-end justify-between bg-[#131313]">
      <div className="flex h-6 w-[95px] items-center gap-[3px] rounded-t-[2px] border-t-2 border-[#2c5d87] bg-[#3c3c3c] pl-2 text-[#b8b8b8]">
        <Stopwatch />
        <span>Profiler</span>
      </div>
      <button aria-label="Window menu" className="mr-[10px] mb-[7px]">
        <Kebab />
      </button>
    </header>
    <Toolbar />
    <Highlights />
    <CpuChart />
    <Timeline />
  </div>
);

export default App;
